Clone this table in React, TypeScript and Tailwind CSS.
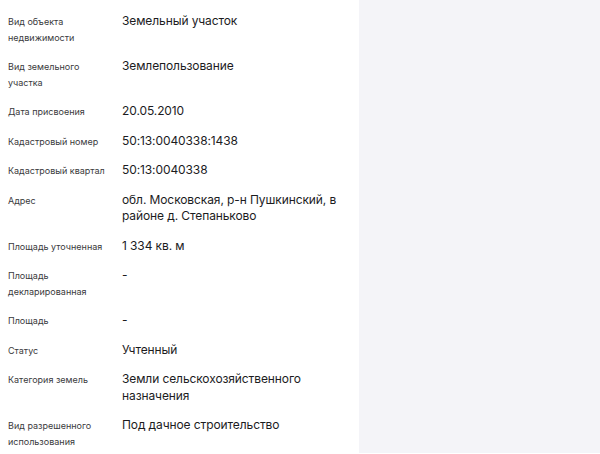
const ROWS: { label: string; value: string }[] = [
  { label: "Вид объекта недвижимости", value: "Земельный участок" },
  { label: "Вид земельного участка", value: "Землепользование" },
  { label: "Дата присвоения", value: "20.05.2010" },
  { label: "Кадастровый номер", value: "50:13:0040338:1438" },
  { label: "Кадастровый квартал", value: "50:13:0040338" },
  { label: "Адрес", value: "обл. Московская, р-н Пушкинский, в районе д. Степаньково" },
  { label: "Площадь уточненная", value: "1 334 кв. м" },
  { label: "Площадь декларированная", value: "-" },
  { label: "Площадь", value: "-" },
  { label: "Статус", value: "Учтенный" },
  { label: "Категория земель", value: "Земли сельскохозяйственного назначения" },
  { label: "Вид разрешенного использования", value: "Под дачное строительство" },
];

function Row({ label, value }: { label: string; value: string }) {
  return (
    <div className="flex items-start">
      <div className="w-[104px] shrink-0 pt-[1px] text-[9px] leading-[15.5px] text-[#3a3a3c]">{label}</div>
      <div className="ml-[10px] w-[226px] text-[12px] leading-[16.5px] tracking-[-0.1px] text-[#1c1c1e]">{value}</div>
    </div>
  );
}

export default function App() {
  return (
    <div className="flex h-[454px] w-[600px] bg-white" style={{ fontFamily: "Inter, 'Noto Sans', sans-serif" }}>
      <div className="flex w-[359px] shrink-0 flex-col gap-[13px] bg-white pl-[8px] pt-[13px]">
        {ROWS.map((r) => (
          <Row key={r.label} label={r.label} value={r.value} />
        ))}
      </div>
      <div className="h-[453px] flex-1 bg-[#f4f4f8]" />
    </div>
  );
}
